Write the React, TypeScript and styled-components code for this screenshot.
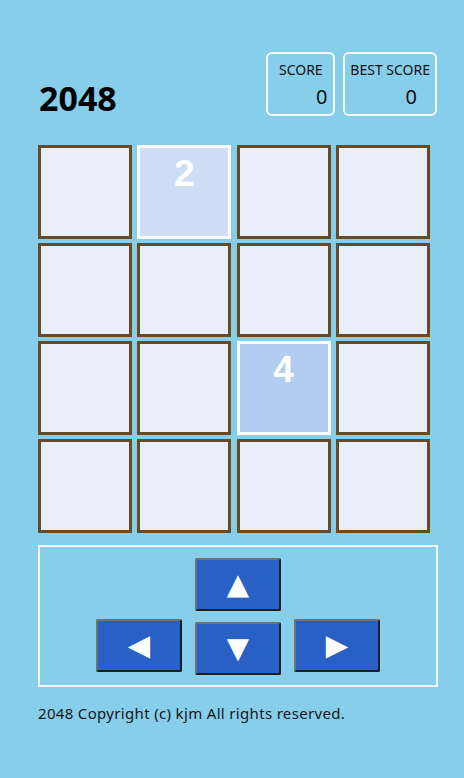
import { createGlobalStyle } from "styled-components";
import styled from "styled-components";

const board: number[][] = [
  [0, 2, 0, 0],
  [0, 0, 0, 0],
  [0, 0, 4, 0],
  [0, 0, 0, 0],
];

const tileColors: Record<number, string> = {
  0: "#e8eefa",
  2: "#ccddf5",
  4: "#b3cdf1",
};

const GlobalStyle = createGlobalStyle`
  html, body {
    margin: 0;
    padding: 0;
    background: #87ceeb;
  }
  body {
    font-family: "Noto Sans", "Noto Sans CJK KR", sans-serif;
    color: #111;
  }
`;

const Page = styled.div`
  width: 464px;
  min-height: 778px;
  box-sizing: border-box;
  padding: 52px 26px 0 38px;
`;

const Header = styled.div`
  width: 399px;
  display: flex;
  justify-content: space-between;
  align-items: flex-end;
`;

const Title = styled.h1`
  margin: 0 0 1px 1px;
  font-size: 34px;
  line-height: 34px;
  font-weight: 700;
  color: #000;
`;

const Scores = styled.div`
  display: flex;
  gap: 8px;
`;

const ScoreBox = styled.div`
  box-sizing: border-box;
  height: 64px;
  min-width: 69px;
  padding: 6px 5px 0;
  border: 2px solid #f4f8fb;
  border-radius: 6px;
  display: flex;
  flex-direction: column;
`;

const ScoreLabel = styled.div`
  font-size: 14px;
  line-height: 19px;
  text-align: center;
  color: #111;
`;

const ScoreValue = styled.div`
  margin-top: 4px;
  padding-left: 42px;
  font-size: 20px;
  line-height: 27px;
  text-align: center;
  color: #111;
`;

const Grid = styled.div`
  margin-top: 29px;
  width: 392px;
  display: grid;
  grid-template-columns: repeat(4, 94px);
  column-gap: 5.33px;
  row-gap: 4px;
`;

const Tile = styled.div<{ $value: number }>`
  box-sizing: border-box;
  width: 94px;
  height: 94px;
  border: 3px solid ${(p) => (p.$value ? "#ffffff" : "#664b25")};
  background: ${(p) => tileColors[p.$value] ?? "#e8eefa"};
  color: #fff;
  font-family: "Liberation Sans", Arial, sans-serif;
  font-weight: 700;
  font-size: 37px;
  line-height: 37px;
  padding-top: 7px;
  text-align: center;
`;

const Controls = styled.div`
  margin-top: 12px;
  box-sizing: border-box;
  width: 400px;
  height: 142px;
  border: 2px solid #f2f6f8;
  padding-top: 11px;
  display: flex;
  flex-direction: column;
  align-items: center;
  gap: 8px;
`;

const ButtonRow = styled.div`
  display: flex;
  align-items: flex-start;
  gap: 12px;
`;

const ArrowButton = styled.button<{ $drop?: boolean }>`
  box-sizing: border-box;
  width: 86px;
  height: 53px;
  margin: ${(p) => (p.$drop ? "3px 1px 0 1px" : "0")};
  padding: 0;
  background: #2960c5;
  border: 2px solid;
  border-color: #727272 #1e1e1e #1e1e1e #727272;
  border-radius: 2px;
  color: #fff;
  font-family: "DejaVu Sans", sans-serif;
  font-size: 29px;
  line-height: 1;
  display: flex;
  align-items: center;
  justify-content: center;
  cursor: pointer;
`;

const Footer = styled.p`
  margin: 16px 0 0;
  font-size: 15px;
  line-height: 20px;
  letter-spacing: 0.33px;
  color: #151520;
`;

export default function App() {
  return (
    <>
      <GlobalStyle />
      <Page>
        <Header>
          <Title>2048</Title>
          <Scores>
            <ScoreBox>
              <ScoreLabel>SCORE</ScoreLabel>
              <ScoreValue>0</ScoreValue>
            </ScoreBox>
            <ScoreBox>
              <ScoreLabel>BEST SCORE</ScoreLabel>
              <ScoreValue>0</ScoreValue>
            </ScoreBox>
          </Scores>
        </Header>
        <Grid>
          {board.flat().map((v, i) => (
            <Tile key={i} $value={v}>
              {v ? v : ""}
            </Tile>
          ))}
        </Grid>
        <Controls>
          <ButtonRow>
            <ArrowButton>▲</ArrowButton>
          </ButtonRow>
          <ButtonRow>
            <ArrowButton>◀</ArrowButton>
            <ArrowButton $drop>▼</ArrowButton>
            <ArrowButton>▶</ArrowButton>
          </ButtonRow>
        </Controls>
        <Footer>2048 Copyright (c) kjm All rights reserved.</Footer>
      </Page>
    </>
  );
}
